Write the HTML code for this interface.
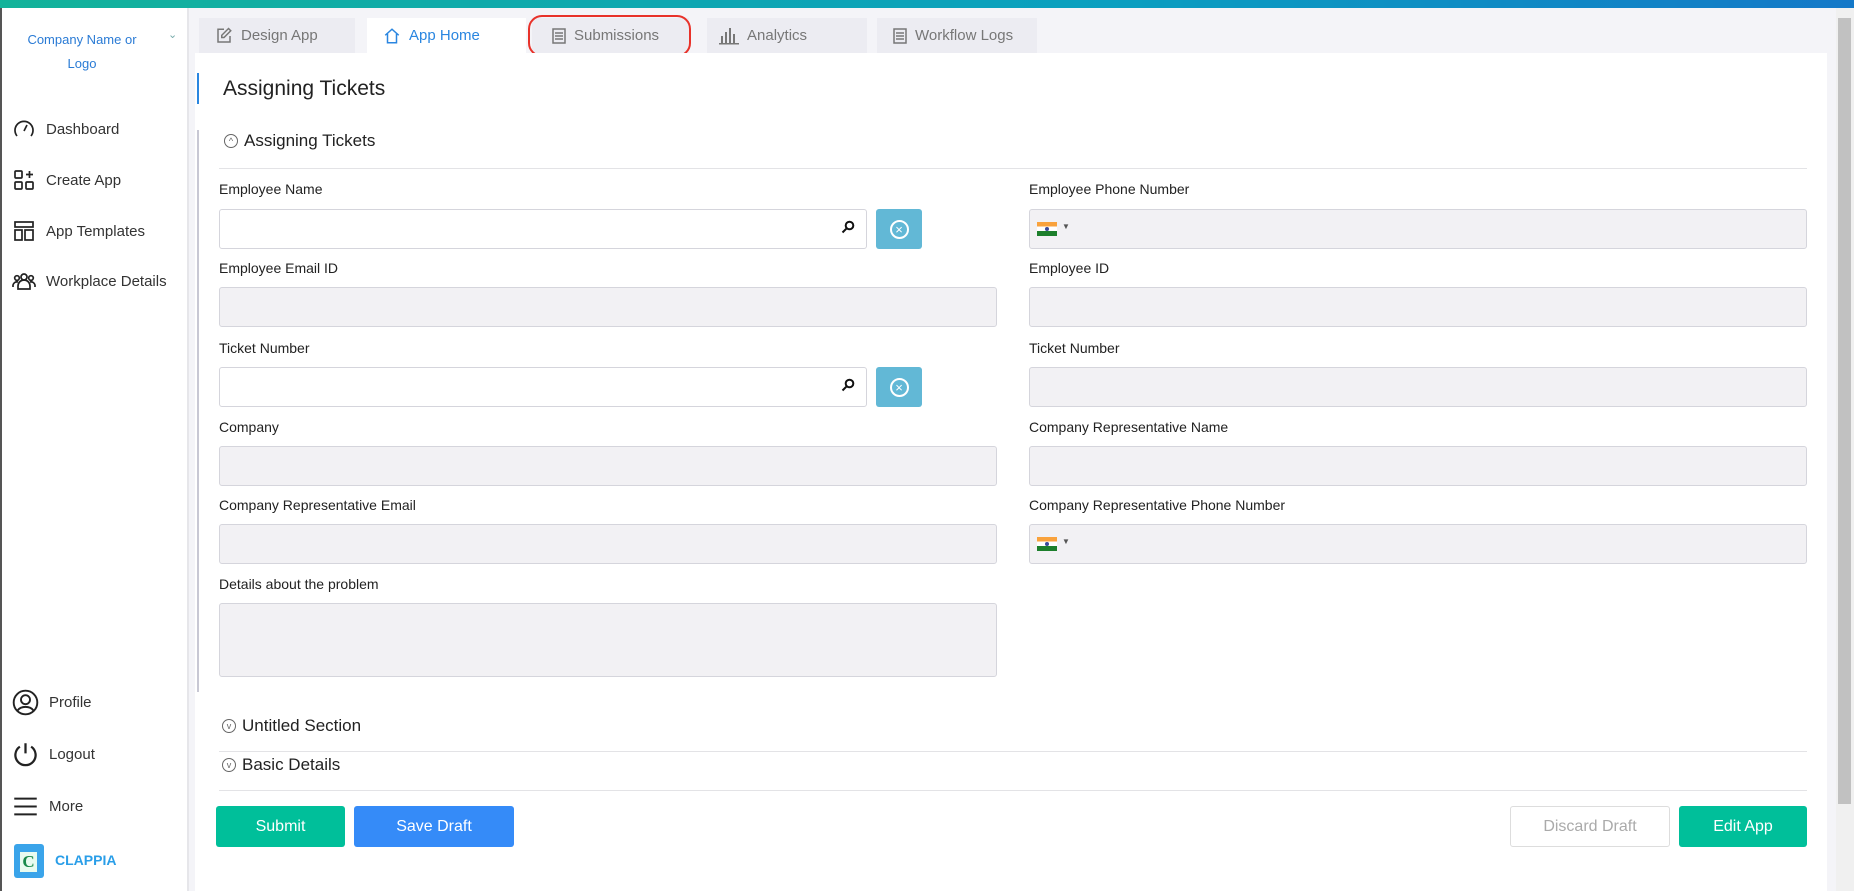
<!DOCTYPE html>
<html><head><meta charset="utf-8"><style>
*{box-sizing:border-box;margin:0;padding:0}
body{width:1854px;height:891px;overflow:hidden;font-family:"Liberation Sans",Arial,sans-serif;background:#f4f4f8;position:relative;color:#222}
.abs{position:absolute}
.top{left:0;top:0;width:1854px;height:8px;background:linear-gradient(90deg,#13b39a,#0a9fc0 60%,#1478c8)}
.side{left:0;top:8px;width:189px;height:883px;background:#fff;border-right:2px solid #e6e6ea;border-left:2px solid #555}
.nav{left:12px;font-size:15px;color:#333;display:flex;align-items:center;gap:10px}
.nav svg{width:24px;height:24px;fill:none;stroke:#222;stroke-width:1.7}
.tab{top:18px;height:35px;background:#ececf2;font-size:15px;color:#777;display:flex;align-items:center;padding-left:16px;gap:8px}
.panel{left:195px;top:53px;width:1632px;height:838px;background:#fff}
.lbl{font-size:14px;color:#222}
.inp{height:40px;border:1px solid #d5d5dc;border-radius:3px;background:#f2f1f4}
.inp.w{background:#fff}
.hr{height:1px;background:#e3e3e6;left:219px;width:1588px}
.sec{font-size:17px;color:#222;display:flex;align-items:center;gap:6px}
.circ{width:14px;height:14px;border:1px solid #666;border-radius:50%;font-size:9px;line-height:12px;text-align:center;color:#666}
.btn{top:806px;height:41px;border-radius:3px;color:#fff;font-size:16px;display:flex;align-items:center;justify-content:center}
.flag{width:20px;height:14px;background:linear-gradient(#f9a23c 0 33%,#fff 33% 66%,#1d7f2c 66%)}
.flag:after{content:"";display:block;width:4px;height:4px;border-radius:50%;background:#3a4a9a;margin:5px auto 0}
</style></head><body>
<div class="abs top"></div>
<div class="abs side"></div>
<div class="abs" style="left:22px;top:28px;width:120px;text-align:center;font-size:13px;color:#2a7bd5;line-height:24px">Company Name or<br>Logo</div>
<div class="abs" style="left:168px;top:28px;color:#7aa;font-size:11px">&#8964;</div>
<div class="abs nav" style="top:117px"><svg viewBox="0 0 24 24"><path d="M5 19A9 9 0 1 1 19 19"/><path d="M12 14l3-6" /></svg>Dashboard</div>
<div class="abs nav" style="top:168px"><svg viewBox="0 0 24 24"><rect x="3" y="3" width="7" height="7" rx="1"/><rect x="3" y="14" width="7" height="7" rx="1"/><rect x="14" y="14" width="7" height="7" rx="1"/><path d="M17.5 3v7M14 6.5h7"/></svg>Create App</div>
<div class="abs nav" style="top:219px"><svg viewBox="0 0 24 24"><rect x="3" y="3" width="18" height="5"/><rect x="3" y="11" width="7" height="10"/><rect x="13" y="11" width="8" height="10"/></svg>App Templates</div>
<div class="abs nav" style="top:269px"><svg viewBox="0 0 24 24"><circle cx="12" cy="8" r="3"/><circle cx="5" cy="9" r="2.3"/><circle cx="19" cy="9" r="2.3"/><path d="M6 20v-3a6 6 0 0 1 12 0v3zM1 18v-2a4 4 0 0 1 5-3M23 18v-2a4 4 0 0 0-5-3"/></svg>Workplace Details</div>
<div class="abs nav" style="top:689px"><svg viewBox="0 0 24 24" style="width:27px;height:27px"><circle cx="12" cy="12" r="10.5"/><circle cx="12" cy="9.5" r="4"/><path d="M5 19a8 6 0 0 1 14 0"/></svg>Profile</div>
<div class="abs nav" style="top:741px"><svg viewBox="0 0 24 24" style="width:27px;height:27px;stroke-width:2"><path d="M12 2v9M7 5a9 9 0 1 0 10 0"/></svg>Logout</div>
<div class="abs nav" style="top:793px"><svg viewBox="0 0 24 24" style="width:27px;height:27px"><path d="M2 5h20M2 12h20M2 19h20"/></svg>More</div>
<div class="abs" style="left:14px;top:844px;width:30px;height:34px;background:#3aa4ea;border-radius:3px"><div style="margin:8px 0 0 6px;width:17px;height:20px;background:#e9fbef;color:#1a8a4a;font-weight:bold;font-size:17px;text-align:center;line-height:20px;font-family:'Liberation Serif',serif">C</div></div>
<div class="abs" style="left:55px;top:852px;font-size:14px;font-weight:bold;color:#2a9ee8">CLAPPIA</div>

<div class="abs tab" style="left:199px;width:156px"><svg width="18" height="18" viewBox="0 0 24 24" fill="none" stroke="#777" stroke-width="2"><path d="M12 3H4v17h16v-8"/><path d="M18 2l3 3-9 9H9v-3z"/></svg>Design App</div>
<div class="abs tab" style="left:367px;width:159px;background:#fff;color:#2a86e0"><svg width="18" height="18" viewBox="0 0 24 24" fill="none" stroke="#2a86e0" stroke-width="2"><path d="M3 11L12 3l9 8M6 9v12h12V9"/></svg>App Home</div>
<div class="abs tab" style="left:532px;width:157px;padding-left:20px"><svg width="14" height="16" viewBox="0 0 14 16" fill="none" stroke="#777" stroke-width="1.5"><rect x="1" y="1" width="12" height="14"/><path d="M3 5h8M3 8h8M3 11h8"/></svg>Submissions</div>
<div class="abs" style="left:528px;top:15px;width:163px;height:42px;border:2px solid #e8322a;border-radius:14px"></div>
<div class="abs tab" style="left:707px;width:160px;padding-left:12px"><svg width="20" height="18" viewBox="0 0 20 18" fill="#777"><rect x="2" y="9" width="2" height="8"/><rect x="6" y="5" width="2" height="12"/><rect x="10" y="1" width="2" height="16"/><rect x="14" y="7" width="2" height="10"/><rect x="0" y="16" width="20" height="1.5"/></svg>Analytics</div>
<div class="abs tab" style="left:877px;width:160px;padding-left:16px"><svg width="14" height="16" viewBox="0 0 14 16" fill="none" stroke="#777" stroke-width="1.5"><rect x="1" y="1" width="12" height="14"/><path d="M3 5h8M3 8h8M3 11h8"/></svg>Workflow Logs</div>

<div class="abs panel"></div>
<div class="abs" style="left:197px;top:73px;width:2px;height:31px;background:#2a86e0"></div>
<div class="abs" style="left:197px;top:130px;width:2px;height:562px;background:#c8c8d4"></div>
<div class="abs" style="left:223px;top:77px;font-size:21px;color:#222">Assigning Tickets</div>
<div class="abs sec" style="left:224px;top:131px"><div class="circ">^</div>Assigning Tickets</div>
<div class="abs hr" style="top:168px"></div>

<div class="abs lbl" style="left:219px;top:181px">Employee Name</div>
<div class="abs inp w" style="left:219px;top:209px;width:648px"></div>
<svg class="abs" style="left:841px;top:220px" width="14" height="14" viewBox="0 0 14 14" fill="none" stroke="#111" stroke-width="2"><circle cx="8.5" cy="5.5" r="3.8"/><path d="M5.8 8.2L1.5 12.5"/></svg>
<div class="abs" style="left:876px;top:209px;width:46px;height:40px;background:#62b8d6;border-radius:3px;display:flex;align-items:center;justify-content:center"><div style="width:19px;height:19px;border:2px solid #fff;border-radius:50%;color:#fff;font-size:13px;line-height:15px;text-align:center">&#215;</div></div>
<div class="abs lbl" style="left:1029px;top:181px">Employee Phone Number</div>
<div class="abs inp" style="left:1029px;top:209px;width:778px"></div>
<div class="abs flag" style="left:1037px;top:222px"></div><div class="abs" style="left:1062px;top:222px;font-size:8px;color:#555">&#9660;</div>

<div class="abs lbl" style="left:219px;top:260px">Employee Email ID</div>
<div class="abs inp" style="left:219px;top:287px;width:778px"></div>
<div class="abs lbl" style="left:1029px;top:260px">Employee ID</div>
<div class="abs inp" style="left:1029px;top:287px;width:778px"></div>

<div class="abs lbl" style="left:219px;top:340px">Ticket Number</div>
<div class="abs inp w" style="left:219px;top:367px;width:648px"></div>
<svg class="abs" style="left:841px;top:378px" width="14" height="14" viewBox="0 0 14 14" fill="none" stroke="#111" stroke-width="2"><circle cx="8.5" cy="5.5" r="3.8"/><path d="M5.8 8.2L1.5 12.5"/></svg>
<div class="abs" style="left:876px;top:367px;width:46px;height:40px;background:#62b8d6;border-radius:3px;display:flex;align-items:center;justify-content:center"><div style="width:19px;height:19px;border:2px solid #fff;border-radius:50%;color:#fff;font-size:13px;line-height:15px;text-align:center">&#215;</div></div>
<div class="abs lbl" style="left:1029px;top:340px">Ticket Number</div>
<div class="abs inp" style="left:1029px;top:367px;width:778px"></div>

<div class="abs lbl" style="left:219px;top:419px">Company</div>
<div class="abs inp" style="left:219px;top:446px;width:778px"></div>
<div class="abs lbl" style="left:1029px;top:419px">Company Representative Name</div>
<div class="abs inp" style="left:1029px;top:446px;width:778px"></div>

<div class="abs lbl" style="left:219px;top:497px">Company Representative Email</div>
<div class="abs inp" style="left:219px;top:524px;width:778px"></div>
<div class="abs lbl" style="left:1029px;top:497px">Company Representative Phone Number</div>
<div class="abs inp" style="left:1029px;top:524px;width:778px"></div>
<div class="abs flag" style="left:1037px;top:537px"></div><div class="abs" style="left:1062px;top:537px;font-size:8px;color:#555">&#9660;</div>

<div class="abs lbl" style="left:219px;top:576px">Details about the problem</div>
<div class="abs inp" style="left:219px;top:603px;width:778px;height:74px"></div>

<div class="abs sec" style="left:222px;top:716px"><div class="circ">v</div>Untitled Section</div>
<div class="abs hr" style="top:751px"></div>
<div class="abs sec" style="left:222px;top:755px"><div class="circ">v</div>Basic Details</div>
<div class="abs hr" style="top:790px"></div>

<div class="abs btn" style="left:216px;width:129px;background:#00bf9a">Submit</div>
<div class="abs btn" style="left:354px;width:160px;background:#358bf8">Save Draft</div>
<div class="abs btn" style="left:1510px;width:160px;background:#fff;border:1px solid #ddd;color:#aaa">Discard Draft</div>
<div class="abs btn" style="left:1679px;width:128px;background:#00bf9a">Edit App</div>

<div class="abs" style="left:1836px;top:8px;width:18px;height:883px;background:#f0f0f0"></div>
<div class="abs" style="left:1838px;top:18px;width:13px;height:786px;background:#c1c1c1"></div>
</body></html>
